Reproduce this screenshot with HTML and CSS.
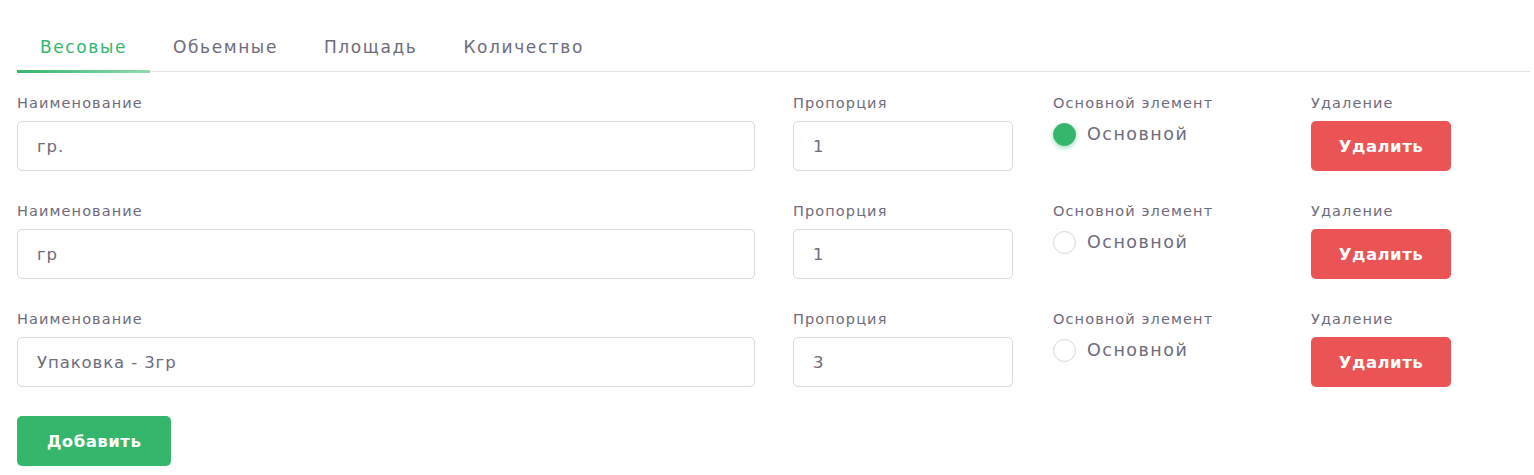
FILE: index.html
```html
<!DOCTYPE html>
<html lang="ru">
<head>
<meta charset="utf-8">
<link rel="stylesheet" href="styles.css">
</head>
<body>
<div class="page">
  <nav class="tabs">
    <a class="tab active">Весовые</a>
    <a class="tab">Обьемные</a>
    <a class="tab">Площадь</a>
    <a class="tab">Количество</a>
  </nav>
  <div class="rows">
    <div class="row">
      <div class="field name"><label class="lbl">Наименование</label><div class="input">гр.</div></div>
      <div class="field prop"><label class="lbl">Пропорция</label><div class="input">1</div></div>
      <div class="field main"><label class="lbl">Основной элемент</label><div class="radio"><span class="dot checked"></span><span class="rtext">Основной</span></div></div>
      <div class="field del"><label class="lbl">Удаление</label><button class="btn danger">Удалить</button></div>
    </div>
    <div class="row">
      <div class="field name"><label class="lbl">Наименование</label><div class="input">гр</div></div>
      <div class="field prop"><label class="lbl">Пропорция</label><div class="input">1</div></div>
      <div class="field main"><label class="lbl">Основной элемент</label><div class="radio"><span class="dot"></span><span class="rtext">Основной</span></div></div>
      <div class="field del"><label class="lbl">Удаление</label><button class="btn danger">Удалить</button></div>
    </div>
    <div class="row">
      <div class="field name"><label class="lbl">Наименование</label><div class="input">Упаковка - 3гр</div></div>
      <div class="field prop"><label class="lbl">Пропорция</label><div class="input">3</div></div>
      <div class="field main"><label class="lbl">Основной элемент</label><div class="radio"><span class="dot"></span><span class="rtext">Основной</span></div></div>
      <div class="field del"><label class="lbl">Удаление</label><button class="btn danger">Удалить</button></div>
    </div>
  </div>
  <button class="btn success add">Добавить</button>
</div>
</body>
</html>
```
FILE: styles.css
```css
* { box-sizing: border-box; }
html, body { margin: 0; padding: 0; background: #fff; }
body { font-family: "DejaVu Sans", "Open Sans", sans-serif; color: #6e6b7b; }
.page { padding: 22px 4px 0 17px; }
.tabs { display: flex; border-bottom: 1px solid #e3e3e6; height: 50px; }
.tab { padding: 0 23px; height: 49px; display: flex; align-items: center; font-size: 17px; letter-spacing: 1.6px; color: #6e6b7b; position: relative; }
.tab.active { color: #34b76c; }
.tab.active::after { content: ""; position: absolute; left: 0; right: 0; bottom: -2px; height: 3px; background: linear-gradient(90deg, #34b76c, #8fdab0); }
.rows { display: flex; flex-direction: column; gap: 30px; margin-top: 21px; }
.row { display: flex; }
.field { display: flex; flex-direction: column; }
.name { width: 738px; margin-right: 38px; }
.prop { width: 220px; margin-right: 40px; }
.main { width: 258px; }
.del { width: 140px; }
.lbl { font-size: 14.5px; letter-spacing: 1.1px; color: #6e6b7b; height: 20px; line-height: 20px; margin-bottom: 8px; }
.input { height: 50px; border: 1px solid #d8d6de; border-radius: 5px; padding: 0 19px; display: flex; align-items: center; font-size: 16.5px; letter-spacing: 0.9px; color: #6e6b7b; }
.radio { display: flex; align-items: center; gap: 11px; height: 26px; }
.dot { width: 23px; height: 23px; border-radius: 50%; border: 1px solid #d8d6de; background: #fff; }
.dot.checked { background: #34b76c; border-color: #34b76c; box-shadow: 0 2px 5px rgba(52,183,108,0.45); }
.rtext { font-size: 17.5px; letter-spacing: 1.5px; color: #6e6b7b; }
.btn { border: 0; border-radius: 5px; color: #fff; font-family: inherit; font-size: 16.5px; font-weight: 700; letter-spacing: 0.5px; height: 50px; cursor: pointer; }
.danger { background: #ea5455; width: 140px; }
.success { background: #34b76c; width: 154px; margin-top: 29px; }
```
